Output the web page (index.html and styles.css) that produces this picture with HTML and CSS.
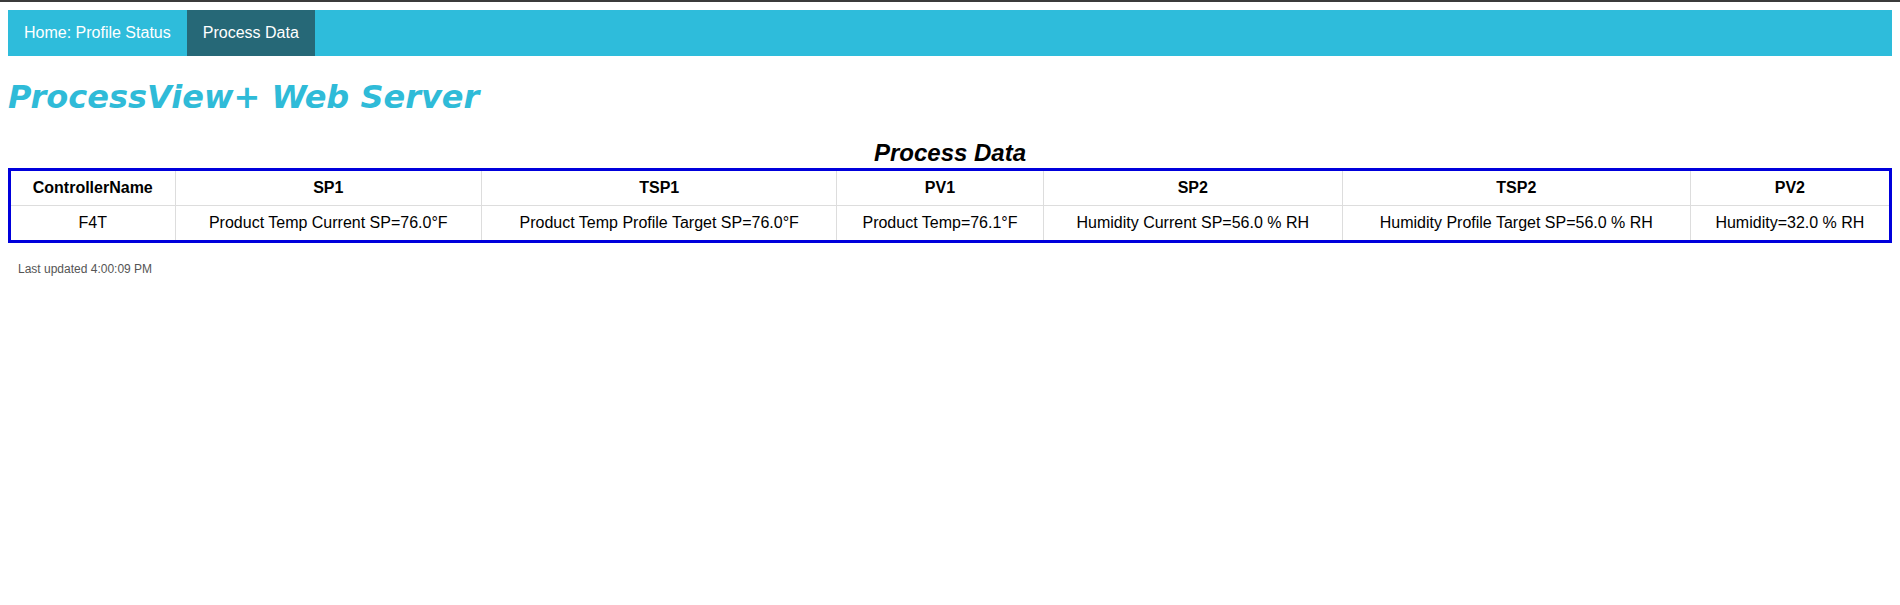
FILE: index.html
```html
<!DOCTYPE html>
<html lang="en">
<head>
<meta charset="utf-8">
<title>ProcessView+ Web Server</title>
<link rel="stylesheet" href="styles.css">
</head>
<body>
  <nav class="topnav">
    <a class="nav-link" href="#">Home: Profile Status</a>
    <a class="nav-link active" href="#">Process Data</a>
  </nav>

  <h1 class="site-title">ProcessView+ Web Server</h1>

  <table class="data-table">
    <caption class="table-caption">Process Data</caption>
    <thead>
      <tr>
        <th>ControllerName</th>
        <th>SP1</th>
        <th>TSP1</th>
        <th>PV1</th>
        <th>SP2</th>
        <th>TSP2</th>
        <th>PV2</th>
      </tr>
    </thead>
    <tbody>
      <tr>
        <td>F4T</td>
        <td>Product Temp Current SP=76.0°F</td>
        <td>Product Temp Profile Target SP=76.0°F</td>
        <td>Product Temp=76.1°F</td>
        <td>Humidity Current SP=56.0 % RH</td>
        <td>Humidity Profile Target SP=56.0 % RH</td>
        <td>Humidity=32.0 % RH</td>
      </tr>
    </tbody>
  </table>

  <p class="last-updated">Last updated 4:00:09 PM</p>
</body>
</html>
```
FILE: styles.css
```css
html {
  background: #ffffff;
}

body {
  margin: 0;
  padding: 8px;
  border-top: 2px solid #3b3b3b;
  font-family: "Liberation Sans", Arial, sans-serif;
  color: #000000;
}

/* Top navigation bar */
.topnav {
  display: flex;
  background: #2ebcdb;
}

.nav-link {
  display: block;
  padding: 14px 16px;
  font-size: 16px;
  line-height: 18px;
  color: #ffffff;
  text-decoration: none;
}

.nav-link.active {
  background: #266877;
}

/* Page heading */
.site-title {
  margin: 23px 0 0;
  font-family: "DejaVu Sans", Verdana, sans-serif;
  font-size: 32px;
  line-height: 37px;
  font-weight: bold;
  font-style: italic;
  color: #2fbbd8;
}

/* Process data table */
.data-table {
  width: 100%;
  margin-top: 23px;
  border-collapse: collapse;
  border: 3px solid #0000dc;
  font-size: 16px;
}

.table-caption {
  margin-bottom: 1px;
  font-size: 24px;
  line-height: 28px;
  font-weight: bold;
  font-style: italic;
  color: #000000;
}

.data-table th,
.data-table td {
  padding: 8px;
  line-height: 18px;
  text-align: center;
  border: 1px solid #dddddd;
}

.data-table th {
  font-weight: bold;
}

.last-updated {
  margin: 19px 0 0 10px;
  font-size: 12px;
  line-height: 14px;
  color: #555555;
}
```
